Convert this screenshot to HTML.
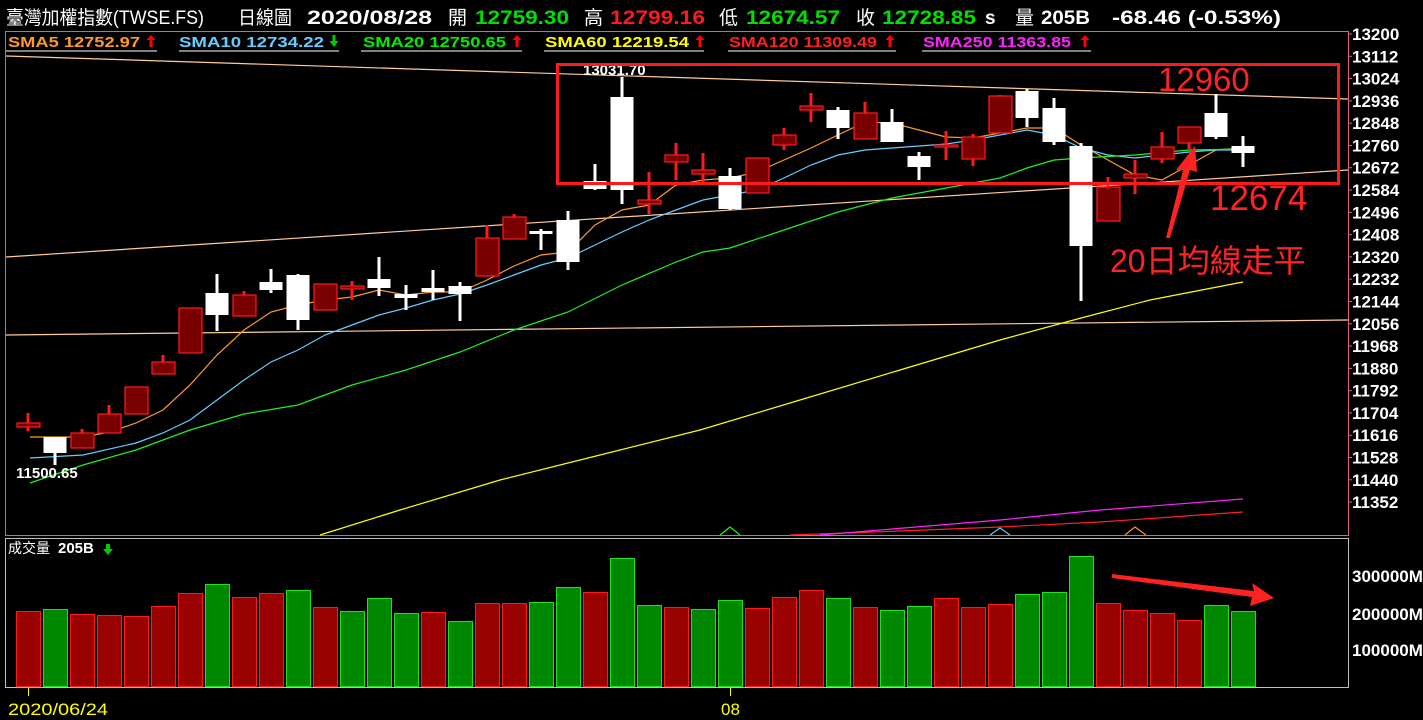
<!DOCTYPE html>
<html><head><meta charset="utf-8">
<style>
html,body{margin:0;padding:0;background:#000;width:1423px;height:720px;overflow:hidden}
svg{display:block}
text{font-family:"Liberation Sans","Noto Sans CJK TC",sans-serif}
</style></head>
<body>
<svg id="s" width="1423" height="720" xmlns="http://www.w3.org/2000/svg">
<rect width="1423" height="720" fill="#000"/>
<!-- header -->
<g font-size="19" font-weight="bold">
<text x="6" y="24" fill="#fff" font-weight="normal" font-family="'Liberation Serif','Noto Serif CJK SC',serif" textLength="198" lengthAdjust="spacingAndGlyphs">臺灣加權指數(TWSE.FS)</text>
<text x="238" y="24" fill="#fff" font-weight="normal" textLength="54" lengthAdjust="spacingAndGlyphs">日線圖</text>
<text x="307" y="24" fill="#fff" textLength="125" lengthAdjust="spacingAndGlyphs">2020/08/28</text>
<text x="448" y="24" fill="#fff" font-weight="normal">開</text>
<text x="475" y="24" fill="#00e000" textLength="94" lengthAdjust="spacingAndGlyphs">12759.30</text>
<text x="584" y="24" fill="#fff" font-weight="normal">高</text>
<text x="610" y="24" fill="#ff1a1a" textLength="95" lengthAdjust="spacingAndGlyphs">12799.16</text>
<text x="719" y="24" fill="#fff" font-weight="normal">低</text>
<text x="746" y="24" fill="#00e000" textLength="94" lengthAdjust="spacingAndGlyphs">12674.57</text>
<text x="856" y="24" fill="#fff" font-weight="normal">收</text>
<text x="882" y="24" fill="#00e000" textLength="94" lengthAdjust="spacingAndGlyphs">12728.85</text>
<text x="985" y="24" fill="#fff">s</text>
<text x="1015" y="24" fill="#fff" font-weight="normal">量</text>
<text x="1041" y="24" fill="#fff" textLength="49" lengthAdjust="spacingAndGlyphs">205B</text>
<text x="1112" y="24" fill="#fff" textLength="169" lengthAdjust="spacingAndGlyphs">-68.46 (-0.53%)</text>
</g>
<!-- panels -->
<rect x="5.5" y="31.5" width="1343" height="504" fill="none" stroke="#e05a8a" stroke-width="1"/>
<rect x="5.5" y="538.5" width="1343" height="149" fill="none" stroke="#c0c0c0" stroke-width="1"/>
<!-- SMA labels -->
<g font-size="15" font-weight="bold">
<text x="8" y="47" fill="#ff9a2a" textLength="132" lengthAdjust="spacingAndGlyphs">SMA5 12752.97</text>
<line x1="6" y1="51" x2="157" y2="51" stroke="#fff"/>
<text x="179" y="47" fill="#66ccff" textLength="145" lengthAdjust="spacingAndGlyphs">SMA10 12734.22</text>
<line x1="179" y1="51" x2="339" y2="51" stroke="#fff"/>
<text x="363" y="47" fill="#00ee00" textLength="143" lengthAdjust="spacingAndGlyphs">SMA20 12750.65</text>
<line x1="361" y1="51" x2="522" y2="51" stroke="#fff"/>
<text x="545" y="47" fill="#ffff00" textLength="144" lengthAdjust="spacingAndGlyphs">SMA60 12219.54</text>
<line x1="544" y1="51" x2="704" y2="51" stroke="#fff"/>
<text x="729" y="47" fill="#ff2020" textLength="148" lengthAdjust="spacingAndGlyphs">SMA120 11309.49</text>
<line x1="728" y1="51" x2="896" y2="51" stroke="#fff"/>
<text x="923" y="47" fill="#ff22ff" textLength="148" lengthAdjust="spacingAndGlyphs">SMA250 11363.85</text>
<line x1="922" y1="51" x2="1091" y2="51" stroke="#fff"/>
</g>
<g id="arrows"></g>
<!-- axis labels -->
<g id="axis" font-size="17" font-weight="bold" fill="#fff"></g>
<g font-size="17" font-weight="bold" fill="#fff">
<text x="1352" y="582">300000M</text>
<text x="1352" y="620">200000M</text>
<text x="1352" y="656">100000M</text>
</g>
<!-- trend lines -->
<g stroke="#ffcc99" stroke-width="1.2" fill="none">
<line x1="6" y1="56" x2="1348" y2="99"/>
<line x1="6" y1="257" x2="1348" y2="170"/>
<line x1="6" y1="335" x2="1348" y2="320"/>
</g>
<g id="ma" fill="none" stroke-width="1.2"></g>
<g id="candles"></g>
<g id="vol"></g>
<text x="583" y="75" fill="#fff" font-size="15" font-weight="bold">13031.70</text>
<text x="16" y="478" fill="#fff" font-size="15" font-weight="bold">11500.65</text>
<!-- annotations -->
<rect x="557.5" y="64.5" width="781" height="119" fill="none" stroke="#ff1a1a" stroke-width="3"/>
<text x="1158" y="91" fill="#ff2222" font-size="33">12960</text>
<text x="1210" y="210" fill="#ff2222" font-size="35">12674</text>
<text x="1110" y="272" fill="#ff2222" font-size="32" font-family="'Liberation Sans','Noto Sans CJK TC',sans-serif">20日均線走平</text>
<polygon points="1166,238 1183,170 1176,170 1195,146 1197,172 1190,170 1170,238" fill="#ff2222"/>
<polygon points="1112,574 1254,591 1252,583 1274,598 1250,606 1252,597 1112,578" fill="#ff2222"/>
<!-- volume title -->
<text x="8" y="553" fill="#fff" font-size="14">成交量</text>
<text x="58" y="553" fill="#fff" font-size="15" font-weight="bold">205B</text>
<polygon points="106,544 110,544 110,549 113,549 108,555 103,549 106,549" fill="#0c0"/>
<!-- dates -->
<line x1="28.5" y1="688" x2="28.5" y2="696" stroke="#ff0"/>
<text x="8" y="715" fill="#ffff00" font-size="17" textLength="100" lengthAdjust="spacingAndGlyphs">2020/06/24</text>
<line x1="730.5" y1="688" x2="730.5" y2="696" stroke="#ff0"/>
<text x="721" y="715" fill="#ffff00" font-size="17">08</text>
</svg>
<script>
var NS="http://www.w3.org/2000/svg";
function el(p,t,a){var e=document.createElementNS(NS,t);for(var k in a)e.setAttribute(k,a[k]);document.getElementById(p).appendChild(e);return e;}
function up(x){el("arrows","polygon",{points:(x-1.5)+",40 "+(x-4.5)+",40 "+x+",35 "+(x+4.5)+",40 "+(x+1.5)+",40 "+(x+1.5)+",47 "+(x-1.5)+",47",fill:"#f00"});}
function dn(x){el("arrows","polygon",{points:(x-1.5)+",35 "+(x+1.5)+",35 "+(x+1.5)+",41 "+(x+4.5)+",41 "+x+",47 "+(x-4.5)+",41 "+(x-1.5)+",41",fill:"#0c0"});}
up(151);dn(334);up(517);up(700);up(890);up(1085);
var labs=[13200,13112,13024,12936,12848,12760,12672,12584,12496,12408,12320,12232,12144,12056,11968,11880,11792,11704,11616,11528,11440,11352];
labs.forEach(function(v,i){var y=34+i*22.29;var t=el("axis","text",{x:1352,y:y+6});t.textContent=v;el("axis","line",{x1:1348,x2:1352,y1:y,y2:y,stroke:"#e05a8a"});});
var C=[[423,427,413,431,1],[437,453,437,465,0],[433,448,429,448,1],[414,433,405,433,1],[387,414,387,414,1],[362,374,355,374,1],[308,353,308,353,1],[293,315,274,331,0],[295,316,291,316,1],[282,290,269,293,0],[275,320,274,330,0],[284,310,284,310,1],[286,289,281,300,1],[279,288,257,296,0],[294,298,285,310,0],[288,292,270,300,0],[286,294,282,321,0],[238,276,225,276,1],[217,239,214,239,1],[231,234,229,250,0],[220,262,211,270,0],[181,189,164,190,0],[97,190,77,204,0],[200,204,172,214,1],[155,162,143,180,1],[170,174,153,185,1],[176,209,168,210,0],[158,193,158,193,1],[135,145,128,150,1],[106,110,93,122,1],[110,128,107,139,0],[113,139,102,139,1],[122,142,109,142,0],[156,167,152,180,0],[145,147,131,160,1],[137,159,134,166,1],[96,133,95,133,1],[91,118,89,127,0],[108,142,98,145,0],[146,246,143,301,0],[187,221,177,221,1],[174,178,160,194,1],[147,159,132,163,1],[127,143,127,150,1],[113,137,94,139,0],[146,153,136,167,0]];
C.forEach(function(c,i){var x=28+27*i;var col=c[4]?"#ff1a1a":"#fff";
el("candles","rect",{x:x-1.5,y:c[2],width:3,height:c[3]-c[2],fill:col});
if(c[4])el("candles","rect",{x:x-11,y:c[0],width:23,height:Math.max(c[1]-c[0],2),fill:"#7a0000",stroke:"#ff1a1a","stroke-width":1.2});
else el("candles","rect",{x:x-11.5,y:c[0],width:23,height:Math.max(c[1]-c[0],3),fill:"#fff"});});
var V=[[611,1],[609,0],[614,1],[615,1],[616,1],[606,1],[593,1],[584,0],[597,1],[593,1],[590,0],[607,1],[611,0],[598,0],[613,0],[612,1],[621,0],[603,1],[603,1],[602,0],[587,0],[592,1],[558,0],[605,0],[607,1],[609,0],[600,0],[608,1],[597,1],[590,1],[598,0],[607,1],[610,0],[606,0],[598,1],[607,1],[604,1],[594,0],[592,0],[556,0],[603,1],[610,1],[613,1],[620,1],[605,0],[611,0]];
V.forEach(function(v,i){var x=28+27*i;el("vol","rect",{x:x-11.5,y:v[0]+.5,width:24,height:686-v[0],fill:v[1]?"#990000":"#008800",stroke:v[1]?"#ff1a1a":"#1ee01e","stroke-width":1});});
function pl(pts,col){el("ma","polyline",{points:pts,stroke:col});}
pl("30,437 83,437 110,432 136,423 163,410 190,385 217,355 244,330 271,312 298,305 325,300 352,297 379,290 406,295 433,292 460,292 487,280 514,266 541,255 568,252 595,225 622,210 649,205 676,185 703,180 730,178 757,172 784,160 811,148 838,135 865,122 892,123 919,130 946,137 973,138 1000,133 1027,128 1054,128 1081,145 1108,160 1135,175 1162,180 1189,165 1216,150 1243,148","#ff9a2a");
pl("30,458 83,455 136,443 163,433 190,420 217,400 244,380 271,362 298,350 325,335 352,325 379,315 406,308 433,300 460,294 487,285 514,275 541,265 568,258 595,245 622,232 649,220 676,210 703,200 730,195 757,190 784,178 811,165 838,155 865,150 892,148 919,146 946,144 973,140 1000,135 1027,130 1054,135 1081,148 1108,155 1135,158 1162,155 1189,152 1216,150 1243,150","#66ccff");
pl("30,483 83,465 136,450 190,430 244,414 298,405 352,385 406,370 460,352 514,330 568,312 622,285 676,262 703,252 730,248 784,230 838,212 892,198 946,188 1000,178 1027,168 1054,160 1081,158 1135,155 1189,150 1243,149","#22ee22");
pl("320,535 400,510 500,480 600,455 700,430 800,400 900,370 1000,340 1081,318 1150,300 1243,282","#ffff00");
pl("790,535 900,531 1000,527 1100,522 1243,512","#ff2020");
pl("820,535 1000,520 1100,510 1243,499","#ff22ff");
pl("720,535 730,527 740,535","#22ee22");
pl("990,535 1000,528 1010,535","#66ccff");
pl("1125,535 1135,527 1146,535","#ff9a2a");
</script>
</body></html>
